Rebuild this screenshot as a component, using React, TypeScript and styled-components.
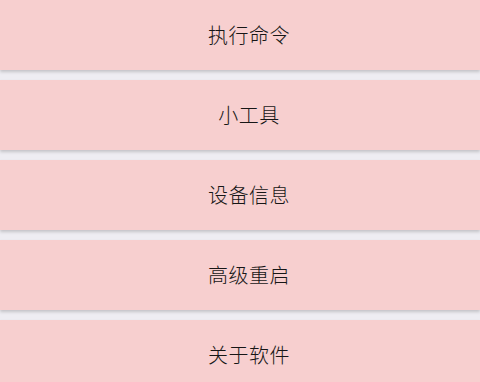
import { createGlobalStyle, styled } from 'styled-components';

const GlobalStyle = createGlobalStyle`
  html, body {
    margin: 0;
    padding: 0;
    background: #eeedf2;
  }
  body {
    font-family: 'Noto Sans CJK SC', sans-serif;
  }
`;

const List = styled.div`
  display: flex;
  flex-direction: column;
  gap: 10px;
`;

const Item = styled.button`
  display: flex;
  align-items: center;
  justify-content: center;
  height: 70px;
  width: 100%;
  border: none;
  margin: 0;
  padding: 0 0 2px 18px;
  background: #f7cfcf;
  box-shadow: 0 2px 3px rgba(0, 0, 0, 0.18);
  color: #161616;
  font-family: 'Noto Sans CJK SC', sans-serif;
  font-size: 20px;
  font-weight: 300;
  letter-spacing: 0.5px;
  cursor: pointer;
`;

const items = ['执行命令', '小工具', '设备信息', '高级重启', '关于软件'];

const App = () => (
  <>
    <GlobalStyle />
    <List>
      {items.map((label) => (
        <Item key={label}>{label}</Item>
      ))}
    </List>
  </>
);

export default App;
